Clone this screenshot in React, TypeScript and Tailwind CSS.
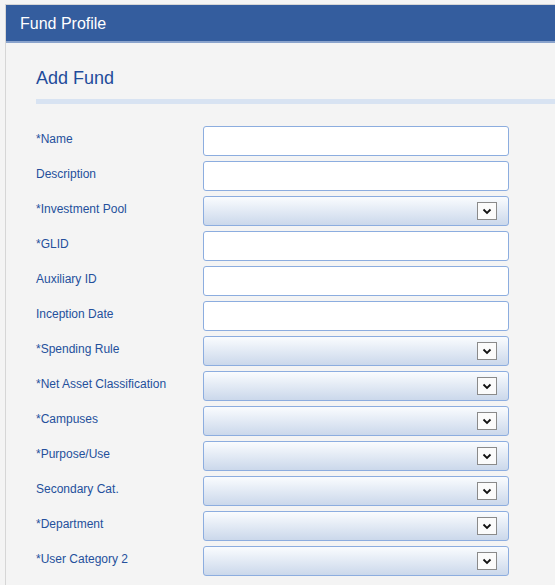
import React from 'react'

const FIELDS: { label: string; kind: 'text' | 'select' }[] = [
  { label: '*Name', kind: 'text' },
  { label: 'Description', kind: 'text' },
  { label: '*Investment Pool', kind: 'select' },
  { label: '*GLID', kind: 'text' },
  { label: 'Auxiliary ID', kind: 'text' },
  { label: 'Inception Date', kind: 'text' },
  { label: '*Spending Rule', kind: 'select' },
  { label: '*Net Asset Classification', kind: 'select' },
  { label: '*Campuses', kind: 'select' },
  { label: '*Purpose/Use', kind: 'select' },
  { label: 'Secondary Cat.', kind: 'select' },
  { label: '*Department', kind: 'select' },
  { label: '*User Category 2', kind: 'select' },
]

function SelectBox() {
  return (
    <div className="w-[306px] h-[30px] rounded-[3px] border border-[#8caddf] bg-gradient-to-b from-[#fafcfe] to-[#cbd8eb] flex items-center justify-end pr-[11px]">
      <div className="w-[20px] h-[18px] border border-[#8a8a8a] bg-[#fbfbfb] flex items-center justify-center">
        <svg width="10" height="7" viewBox="0 0 10 7">
          <path d="M1.5 1.5 L5 5 L8.5 1.5" fill="none" stroke="#111" strokeWidth="1.8" />
        </svg>
      </div>
    </div>
  )
}

export default function App() {
  return (
    <div className="min-h-[585px] bg-[#f4f4f4] pt-[4px] pl-[5px] font-['Liberation_Sans',Arial,sans-serif] overflow-hidden">
      <div className="border-l border-t border-[#d6d6d6] bg-[#f4f4f4] min-h-[581px]">
        <div className="h-[38px] bg-[#345d9e] border-b-2 border-[#8aa3cc] flex items-center pl-[14px] pt-[2px]">
          <span className="text-white text-[16px]">Fund Profile</span>
        </div>
        <div className="pl-[30px] pt-[23px]">
          <h2 className="text-[#1f4c9b] text-[18px] leading-[24px] mb-[9px]">Add Fund</h2>
          <div className="h-[5px] bg-[#d8e3f2] mb-[22px]" />
          <div className="flex flex-col gap-[5px]">
            {FIELDS.map(f => (
              <div key={f.label} className="flex items-center h-[30px]">
                <label className="w-[167px] text-[12px] text-[#24509c] pb-[4px]">{f.label}</label>
                {f.kind === 'text' ? (
                  <input className="w-[306px] h-[30px] rounded-[3px] border border-[#8caddf] bg-white outline-none" />
                ) : (
                  <SelectBox />
                )}
              </div>
            ))}
          </div>
        </div>
      </div>
    </div>
  )
}
